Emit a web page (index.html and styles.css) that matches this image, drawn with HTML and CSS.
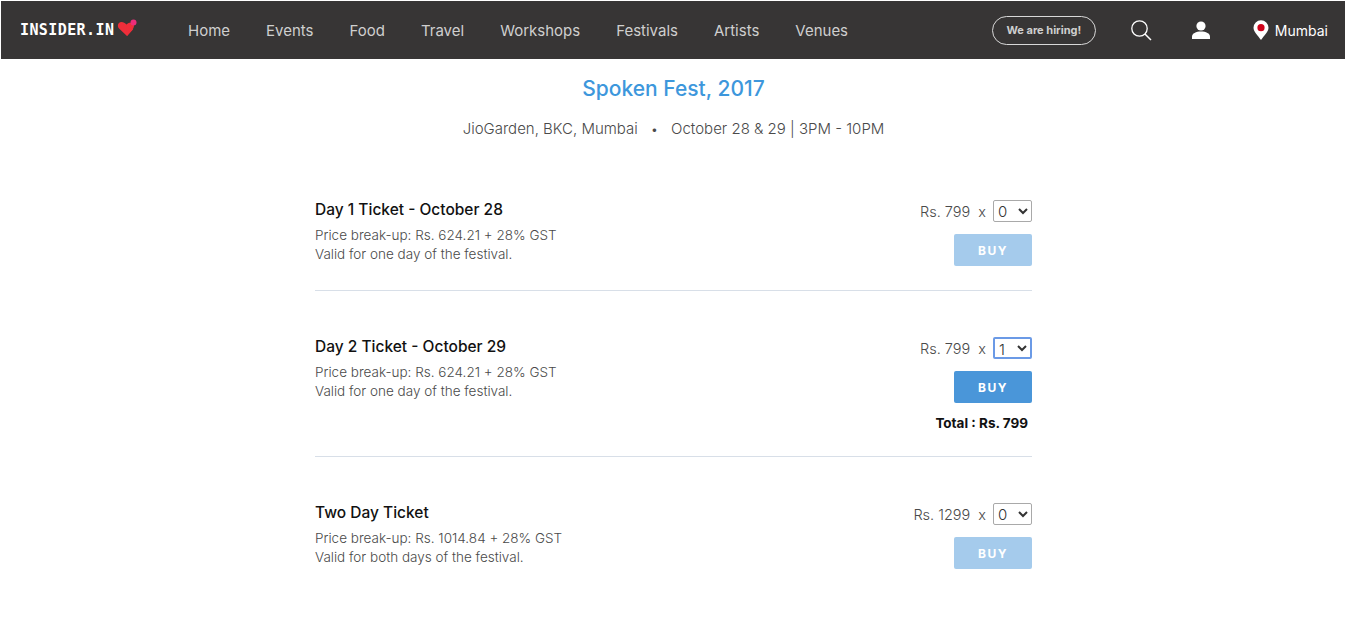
FILE: index.html
```html
<!DOCTYPE html>
<html lang="en">
<head>
<meta charset="utf-8">
<title>Spoken Fest, 2017</title>
<link rel="stylesheet" href="styles.css">
</head>
<body>
<header class="topbar">
  <a class="logo">
    <span class="logo-text">INSIDER.IN</span>
    <svg class="logo-heart" width="20" height="18" viewBox="0 0 20 18"><path d="M10 17 L2 9.5 C-0.5 6.5 1.5 3 4.5 3 C6.5 3 8 4 9.5 5.5 L14 8.5 L16 10.5 Z" fill="#ee2e3a"/><path d="M9.5 5.5 C11 4 12.5 3.6 14 4 L16.5 5 C17.5 6.5 17 8.5 15.5 10.5 L10 17 Z" fill="#ee2e3a"/><circle cx="16.5" cy="3.5" r="3" fill="#ec2d7a"/></svg>
  </a>
  <nav class="nav">
    <a>Home</a><a>Events</a><a>Food</a><a>Travel</a><a>Workshops</a><a>Festivals</a><a>Artists</a><a>Venues</a>
  </nav>
  <div class="actions">
    <a class="hiring">We are hiring!</a>
    <svg class="icon-search" width="22" height="22" viewBox="0 0 22 22" fill="none" stroke="#fff"><circle cx="9.5" cy="9.5" r="7.7" stroke-width="1.3"/><path d="M15 15 L21 21" stroke-width="1.5"/></svg>
    <svg class="icon-user" width="20" height="18" viewBox="0 0 20 18" fill="#fff"><circle cx="10" cy="5" r="4.6"/><path d="M1 18 V15.5 C1 12.5 5 10.5 10 10.5 C15 10.5 19 12.5 19 15.5 V18 Z"/></svg>
    <div class="city">
      <svg width="16" height="20" viewBox="0 0 16 20"><path d="M8 20 C5 15.5 .5 12 .5 7.7 A7.5 7.5 0 0 1 15.5 7.7 C15.5 12 11 15.5 8 20 Z" fill="#fff"/><circle cx="8" cy="7.7" r="3.6" fill="#d0021b"/></svg>
      <span>Mumbai</span>
    </div>
  </div>
</header>

<main class="page">
  <h1 class="title">Spoken Fest, 2017</h1>
  <p class="venue"><span>JioGarden, BKC, Mumbai</span><span class="dot">•</span><span>October 28 &amp; 29 | 3PM - 10PM</span></p>

  <section class="ticket">
    <div class="info">
      <h2>Day 1 Ticket - October 28</h2>
      <p>Price break-up: Rs. 624.21 + 28% GST</p>
      <p>Valid for one day of the festival.</p>
    </div>
    <div class="buy">
      <div class="price"><span>Rs. 799</span><span class="times">x</span>
        <select class="qty"><option selected>0</option><option>1</option><option>2</option></select>
      </div>
      <button class="btn off">BUY</button>
    </div>
  </section>

  <section class="ticket">
    <div class="info">
      <h2>Day 2 Ticket - October 29</h2>
      <p>Price break-up: Rs. 624.21 + 28% GST</p>
      <p>Valid for one day of the festival.</p>
    </div>
    <div class="buy">
      <div class="price"><span>Rs. 799</span><span class="times">x</span>
        <select class="qty focus"><option>0</option><option selected>1</option><option>2</option></select>
      </div>
      <button class="btn">BUY</button>
      <div class="total">Total : Rs. 799</div>
    </div>
  </section>

  <section class="ticket last">
    <div class="info">
      <h2>Two Day Ticket</h2>
      <p>Price break-up: Rs. 1014.84 + 28% GST</p>
      <p>Valid for both days of the festival.</p>
    </div>
    <div class="buy">
      <div class="price"><span>Rs. 1299</span><span class="times">x</span>
        <select class="qty"><option selected>0</option><option>1</option><option>2</option></select>
      </div>
      <button class="btn off">BUY</button>
    </div>
  </section>
</main>
</body>
</html>
```

FILE: styles.css
```css
* { box-sizing: border-box; }
html, body { margin: 0; background: #fff; }
body { padding: 1px 0 0 1px; font-family: "Inter", "Liberation Sans", sans-serif; color: #4a4a4a; }

.topbar { display: flex; align-items: center; height: 58px; background: #373535; padding-left: 19px; }
.logo { display: flex; align-items: center; width: 168px; }
.logo-text { font-family: "DejaVu Sans Mono", monospace; font-weight: 700; font-size: 15px; letter-spacing: 0.4px; color: #fff; }
.logo-heart { margin: -4px 0 0 3px; }
.nav { display: flex; gap: 36px; font-size: 15px; color: #cfcfcf; }
.actions { display: flex; align-items: center; margin-left: auto; padding-right: 17px; }
.hiring { display: block; width: 104px; height: 29px; border: 1px solid #d8d8d8; border-radius: 15px; color: #cfcfcf; font-size: 11px; font-weight: 700; line-height: 27px; text-align: center; }
.icon-search { margin-left: 34px; }
.icon-user { margin-left: 39px; }
.city { display: flex; align-items: center; gap: 6px; margin-left: 42px; font-size: 14px; color: #fff; }

.page { width: 717px; margin: 0 0 0 314px; }
.title { margin: 17px 0 0; text-align: center; font-size: 21px; line-height: 26px; font-weight: 500; color: #3d97dc; }
.venue { display: flex; justify-content: center; gap: 13px; margin: 17px 0 0; font-size: 15px; line-height: 20px; font-weight: 300; }
.dot { font-size: 13px; }

.ticket { display: flex; justify-content: space-between; border-bottom: 1px solid #d8dfe8; padding: 0 0 24px; margin-top: 46px; }
.ticket:first-of-type { margin-top: 61px; }
.ticket.last { border-bottom: 0; }
.info h2 { margin: 0 0 6px; font-size: 15.5px; line-height: 20px; font-weight: 500; color: #111; }
.info p { margin: 0; font-size: 13.5px; line-height: 19px; font-weight: 300; }

.buy { display: flex; flex-direction: column; align-items: flex-end; }
.price { display: flex; align-items: center; font-size: 14.5px; font-weight: 300; height: 22px; }
.times { margin: 0 7px 0 8px; }
.qty { width: 39px; height: 22px; border: 1px solid #a9a9a9; border-radius: 2px; background: #fff; color: #333; font: 300 15px "Inter", sans-serif; padding: 0; }
.qty.focus { border: 2px solid #6b9ae6; }
.btn { width: 78px; height: 32px; margin-top: 12px; border: 0; border-radius: 2px; background: #4a96d9; color: #fff; font: 700 12px "Inter", sans-serif; letter-spacing: 1.5px; }
.btn.off { background: #a5cbec; }
.total { margin: 12px 4px 0 0; font-size: 13.5px; line-height: 17px; font-weight: 700; color: #111; }
```
